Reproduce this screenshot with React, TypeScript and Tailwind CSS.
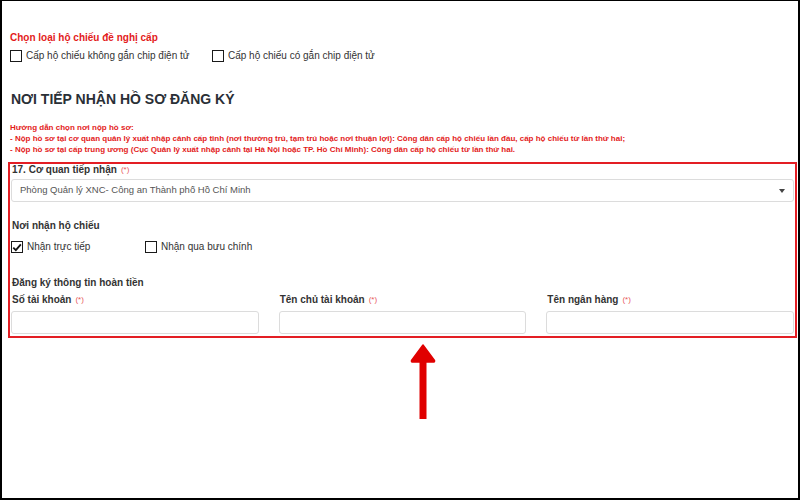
import React from 'react';

const Req = () => <span className="text-[#e8585b] font-normal text-[8px] ml-1 align-top">(*)</span>;

const Box = ({ checked = false }: { checked?: boolean }) => (
  <span className="w-[12px] h-[12px] border-[1.5px] border-[#1a1a1a] bg-white flex items-center justify-center shrink-0">
    {checked && (
      <svg viewBox="0 0 12 12" className="w-[11px] h-[11px]">
        <path d="M1.5 6.2 L4.6 9.2 L10.6 2.2" fill="none" stroke="#111" strokeWidth="2.2" />
      </svg>
    )}
  </span>
);

const Field = ({ label }: { label: string }) => (
  <div className="flex flex-col">
    <div className="text-[10px] leading-[12px] font-bold text-[#333] mb-[5px] pl-[1px]">
      {label}
      <Req />
    </div>
    <div className="h-[23px] border border-[#dcdcdc] rounded-[3px] bg-white" />
  </div>
);

export default function App() {
  return (
    <div className="relative w-[800px] h-[500px] bg-white border-l-2 border-r-2 border-t border-b-2 border-black pl-[6px] pr-[1px] font-['Liberation_Sans',Arial,sans-serif] text-[#333] overflow-hidden">
      <div className="pl-[2px] pt-[30px]">
        <div className="text-[10px] leading-[14px] font-bold text-[#e31b1b]">Chọn loại hộ chiếu đề nghị cấp</div>
        <div className="flex items-center mt-[4px] text-[10px] leading-[14px] text-[#333]">
          <div className="flex items-center gap-[4px] w-[202px]">
            <Box />
            <span>Cấp hộ chiếu không gắn chip điện tử</span>
          </div>
          <div className="flex items-center gap-[4px]">
            <Box />
            <span>Cấp hộ chiếu có gắn chip điện tử</span>
          </div>
        </div>
        <h1 className="mt-[26px] text-[14px] leading-[20px] font-bold text-[#2a2f36] pl-[1px]">NƠI TIẾP NHẬN HỒ SƠ ĐĂNG KÝ</h1>
        <div className="mt-[13px] text-[8px] leading-[11px] font-bold text-[#e31b1b]">
          <div>Hướng dẫn chọn nơi nộp hồ sơ:</div>
          <div>- Nộp hồ sơ tại cơ quan quản lý xuất nhập cảnh cấp tỉnh (nơi thường trú, tạm trú hoặc nơi thuận lợi): Công dân cấp hộ chiếu lần đầu, cấp hộ chiếu từ lần thứ hai;</div>
          <div>- Nộp hồ sơ tại cấp trung ương (Cục Quản lý xuất nhập cảnh tại Hà Nội hoặc TP. Hồ Chí Minh): Công dân cấp hộ chiếu từ lần thứ hai.</div>
        </div>
      </div>

      <div className="mt-[7px] border-2 border-[#e31e24] px-[1px] pb-[2px]">
        <div className="text-[10px] leading-[12px] font-bold pl-[1px]">
          17. Cơ quan tiếp nhận
          <Req />
        </div>
        <div className="mt-[3px] h-[23px] border border-[#dcdcdc] rounded-[3px] flex items-center justify-between pl-[8px] pr-[8px] text-[9.5px] text-[#555]">
          <span>Phòng Quản lý XNC- Công an Thành phố Hồ Chí Minh</span>
          <span className="w-0 h-0 border-l-[3px] border-r-[3px] border-t-[4px] border-l-transparent border-r-transparent border-t-[#444]" />
        </div>
        <div className="mt-[18px] text-[10px] leading-[12px] font-bold pl-[1px]">Nơi nhận hộ chiếu</div>
        <div className="mt-[9px] flex items-center text-[10px] leading-[12px]">
          <div className="flex items-center gap-[4px] w-[134px]">
            <Box checked />
            <span>Nhận trực tiếp</span>
          </div>
          <div className="flex items-center gap-[4px]">
            <Box />
            <span>Nhận qua bưu chính</span>
          </div>
        </div>
        <div className="mt-[24px] text-[10px] leading-[12px] font-semibold pl-[1px]">Đăng ký thông tin hoàn tiền</div>
        <div className="mt-[5px] grid grid-cols-3 gap-x-[20px]">
          <Field label="Số tài khoản" />
          <Field label="Tên chủ tài khoản" />
          <Field label="Tên ngân hàng" />
        </div>
      </div>

      <svg className="absolute left-[406px] top-[342px]" width="30" height="80" viewBox="0 0 30 80">
        <path d="M15 2 L3.5 17.5 Q3 19 5 19 L25 19 Q27 19 26.5 17.5 Z" fill="#e00000" stroke="#e00000" strokeLinejoin="round" strokeWidth="1.5" />
        <rect x="11.5" y="18" width="7" height="58" fill="#e00000" />
      </svg>
    </div>
  );
}
